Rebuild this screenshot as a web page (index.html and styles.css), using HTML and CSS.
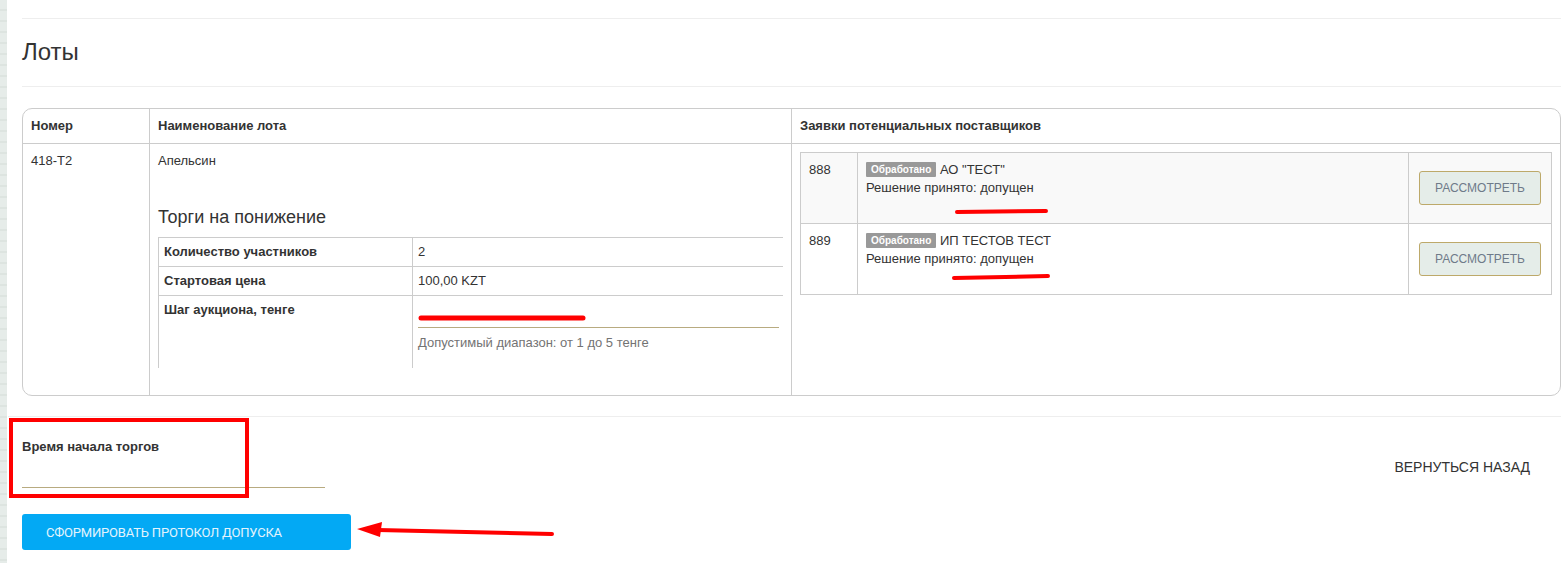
FILE: index.html
```html
<!DOCTYPE html>
<html lang="ru">
<head>
    <meta charset="UTF-8">
    <meta name="viewport" content="width=device-width, initial-scale=1.0">
    <title>Лоты</title>
    <link rel="stylesheet" href="styles.css">
</head>
<body>
    <div class="side-strip"></div>

    <div class="page">
        <div class="rule"></div>
        <h3 class="section-title">Лоты</h3>
        <div class="rule"></div>

        <table class="lots">
            <thead>
                <tr>
                    <th class="col-num">Номер</th>
                    <th class="col-name">Наименование лота</th>
                    <th class="col-bids">Заявки потенциальных поставщиков</th>
                </tr>
            </thead>
            <tbody>
                <tr>
                    <td class="col-num">418-Т2</td>
                    <td class="col-name">
                        <div class="lot-name">Апельсин</div>
                        <h4 class="auction-title">Торги на понижение</h4>
                        <table class="auction">
                            <tr>
                                <td class="auction-label">Количество участников</td>
                                <td>2</td>
                            </tr>
                            <tr>
                                <td class="auction-label">Стартовая цена</td>
                                <td>100,00 KZT</td>
                            </tr>
                            <tr>
                                <td class="auction-label">Шаг аукциона, тенге</td>
                                <td class="step-cell">
                                    <input type="text" class="line-input">
                                    <div class="help">Допустимый диапазон: от 1 до 5 тенге</div>
                                </td>
                            </tr>
                        </table>
                    </td>
                    <td class="col-bids">
                        <table class="bids">
                            <tr class="striped">
                                <td class="bid-num">888</td>
                                <td class="bid-info">
                                    <div><span class="badge">Обработано</span> <span class="bid-company">АО "ТЕСТ"</span></div>
                                    <div>Решение принято: допущен</div>
                                </td>
                                <td class="bid-action"><button class="btn-view">Рассмотреть</button></td>
                            </tr>
                            <tr>
                                <td class="bid-num">889</td>
                                <td class="bid-info">
                                    <div><span class="badge">Обработано</span> <span class="bid-company">ИП ТЕСТОВ ТЕСТ</span></div>
                                    <div>Решение принято: допущен</div>
                                </td>
                                <td class="bid-action"><button class="btn-view">Рассмотреть</button></td>
                            </tr>
                        </table>
                    </td>
                </tr>
            </tbody>
        </table>

        <div class="rule rule-wide"></div>

        <div class="start-row">
            <div class="form-group">
                <label for="startTime">Время начала торгов</label>
                <input type="text" id="startTime" class="line-input">
            </div>
            <a href="#" class="back-link">Вернуться назад</a>
        </div>

        <button class="btn-primary">Сформировать протокол допуска</button>
    </div>

    <!-- пометки поверх скриншота -->
    <svg class="marks" width="1561" height="563" viewBox="0 0 1561 563">
        <g stroke="#ff0000" stroke-linecap="round" fill="none">
            <line x1="421" y1="318" x2="583" y2="318" stroke-width="5"/>
            <line x1="957" y1="212" x2="1046" y2="211" stroke-width="4"/>
            <line x1="954" y1="278" x2="1048" y2="276" stroke-width="4"/>
            <rect x="11" y="420" width="236" height="76" stroke-width="4" stroke-linecap="butt"/>
            <line x1="552" y1="534" x2="378" y2="530" stroke-width="4"/>
        </g>
        <polygon points="357,529 382,522 380,537" fill="#ff0000"/>
    </svg>
</body>
</html>
```

FILE: styles.css
```css
* {
    margin: 0;
    padding: 0;
    box-sizing: border-box;
}

body {
    font-family: 'Liberation Sans', Arial, sans-serif;
    font-size: 13px;
    line-height: 18px;
    color: #333;
    background: #fff;
    display: flex;
    min-height: 563px;
    overflow: hidden;
    position: relative;
}

.side-strip {
    width: 7px;
    flex-shrink: 0;
    background: repeating-linear-gradient(180deg, #e6ece9 0, #e6ece9 9px, #dde4e0 9px, #dde4e0 11px);
}

.page {
    flex: 1;
    padding-left: 15px;
}

.rule {
    border-top: 1px solid #eee;
}

.page > .rule:first-child {
    margin-top: 18px;
}

.section-title {
    font-size: 24px;
    font-weight: normal;
    line-height: 26px;
    margin: 20px 0 21px;
}

/* таблица лотов */
.lots {
    width: 100%;
    border: 1px solid #ccc;
    border-radius: 10px;
    border-spacing: 0;
    border-collapse: separate;
    margin-top: 21px;
}

.lots th {
    text-align: left;
    font-size: 13px;
    font-weight: bold;
    padding: 8px;
    border-bottom: 1px solid #ccc;
}

.lots td {
    vertical-align: top;
    padding: 8px 8px 27px;
}

.lots .col-num {
    width: 126px;
}

.lots .col-name {
    width: 642px;
    border-left: 1px solid #ccc;
}

.lots .col-bids {
    border-left: 1px solid #ccc;
    padding-bottom: 8px;
}

.lot-name {
    font-size: 13px;
}

.auction-title {
    font-size: 18px;
    font-weight: normal;
    line-height: 20px;
    margin: 37px 0 10px;
}

.auction {
    width: 100%;
    border-spacing: 0;
    border-left: 1px solid #ccc;
}

.lots .auction td {
    padding: 5px 5px;
    border-top: 1px solid #ccc;
    vertical-align: top;
}

.lots .auction td + td {
    border-left: 1px solid #ccc;
}

.auction-label {
    width: 253px;
    font-weight: bold;
}

.lots .auction .step-cell {
    padding-right: 4px;
}

.line-input {
    display: block;
    width: 100%;
    height: 27px;
    border: none;
    border-bottom: 1px solid #b8ab80;
    background: transparent;
    font: inherit;
    outline: none;
}

.help {
    font-size: 13px;
    line-height: 16px;
    color: #737373;
    margin: 7px 0 12px;
}

/* заявки */
.bids {
    width: 100%;
    border-spacing: 0;
    border: 1px solid #ccc;
    border-bottom: none;
}

.lots .bids td {
    padding: 8px 8px;
    border-bottom: 1px solid #ccc;
    vertical-align: top;
}

.bids .striped {
    background: #f9f9f9;
}

.lots .bids .bid-num {
    width: 56px;
}

.lots .bids .bid-info {
    border-left: 1px solid #ccc;
}

.bid-info .badge + .bid-company {
    font-size: 13px;
}

.badge {
    display: inline-block;
    background: #999;
    color: #fff;
    font-size: 10px;
    font-weight: bold;
    line-height: 15px;
    padding: 0 5px;
    border-radius: 1px;
    vertical-align: 1px;
}

.lots .bids .bid-action {
    width: 143px;
    border-left: 1px solid #ccc;
    padding: 18px 10px;
    vertical-align: middle;
}

.bids tr + tr .bid-action {
    padding-bottom: 19px;
}

.btn-view {
    display: block;
    width: 122px;
    height: 34px;
    background: #e5ede9;
    border: 1px solid #bda96a;
    border-radius: 3px;
    color: #6f7b89;
    font-family: inherit;
    font-size: 12px;
    text-transform: uppercase;
    cursor: pointer;
}

.rule-wide {
    margin-top: 20px;
    margin-left: -14px;
}

.start-row {
    display: flex;
    justify-content: space-between;
    align-items: center;
    padding-right: 31px;
}

.form-group {
    width: 303px;
    padding-top: 22px;
}

.form-group label {
    display: block;
    font-size: 13px;
    font-weight: bold;
    line-height: 16px;
}

.form-group .line-input {
    margin-top: 5px;
    height: 28px;
}

.back-link {
    color: #333;
    text-decoration: none;
    text-transform: uppercase;
    font-size: 14px;
    margin-top: 29px;
}

.btn-primary {
    display: block;
    width: 329px;
    height: 36px;
    margin-top: 26px;
    padding-left: 24px;
    text-align: left;
    background: #03a9f4;
    color: #e3f4fd;
    border: none;
    border-radius: 3px;
    font-family: Roboto, 'Liberation Sans', sans-serif;
    font-size: 13px;
    letter-spacing: -0.2px;
    text-transform: uppercase;
    cursor: pointer;
}

.marks {
    position: absolute;
    left: 0;
    top: 0;
    pointer-events: none;
}
```
